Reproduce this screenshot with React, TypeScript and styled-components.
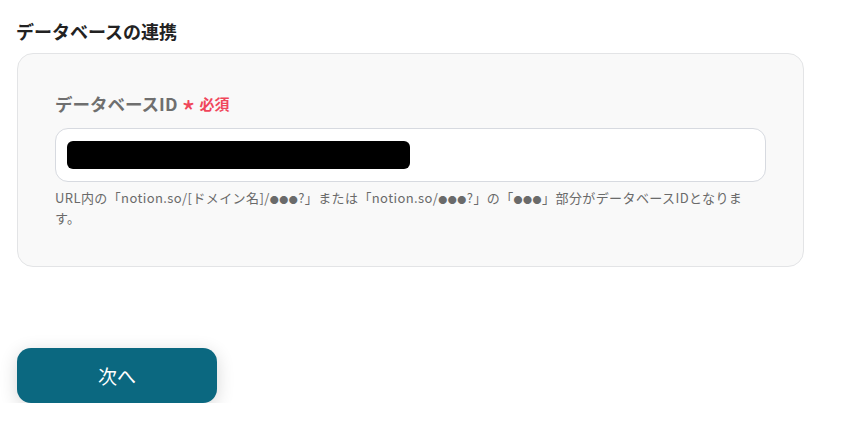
import React from "react";
import styled, { createGlobalStyle } from "styled-components";

const GlobalStyle = createGlobalStyle`
  html, body {
    margin: 0;
    padding: 0;
    background: #ffffff;
    font-family: "Noto Sans CJK JP", "Noto Sans", sans-serif;
  }
  * { box-sizing: border-box; }
`;

const Page = styled.div`
  padding: 19px 0 0 17px;
  width: 804px;
`;

const Title = styled.h2`
  margin: 0 0 10px -1px;
  font-size: 18px;
  line-height: 24px;
  font-weight: 700;
  color: #222222;
`;

const Card = styled.section`
  width: 787px;
  background: #f9f9f9;
  border: 1px solid #e3e4e6;
  border-radius: 16px;
  padding: 38px 37px 38px 37px;
  display: flex;
  flex-direction: column;
`;

const Label = styled.div`
  display: flex;
  align-items: center;
  font-size: 17.5px;
  line-height: 24px;
  font-weight: 700;
  color: #6f6f6f;
`;

const Asterisk = styled.span`
  margin-left: 4px;
  color: #f0465a;
  font-size: 30px;
  line-height: 24px;
  font-weight: 400;
  transform: translateY(7px);
`;

const Required = styled.span`
  margin-left: 4px;
  color: #f0465a;
  font-size: 15px;
  font-weight: 700;
`;

const InputBox = styled.div`
  margin-top: 12px;
  height: 54px;
  background: #ffffff;
  border: 1px solid #d7dae0;
  border-radius: 13px;
  display: flex;
  align-items: center;
  padding: 0 11px;
`;

const Masked = styled.div<{ $w: number }>`
  width: ${(p) => p.$w}px;
  height: 28px;
  background: #000000;
  border-radius: 6px;
`;

const Help = styled.p`
  margin: 6px 0 0;
  max-width: 690px;
  font-size: 13px;
  line-height: 20px;
  letter-spacing: 0.4px;
  color: #6a6a6a;
`;

const Dots = styled.span`
  font-size: 9px;
  line-height: 1;
  letter-spacing: 0.5px;
`;

const NextButton = styled.button`
  margin-top: 81px;
  width: 200px;
  height: 55px;
  border: none;
  border-radius: 14px;
  background: #0b6880;
  color: #ffffff;
  font-family: "Noto Sans CJK JP", sans-serif;
  font-size: 19px;
  box-shadow: 0 4px 18px rgba(0, 0, 0, 0.16);
  cursor: pointer;
`;

export default function App() {
  return (
    <>
      <GlobalStyle />
      <Page>
        <Title>データベースの連携</Title>
        <Card>
          <Label>
            データベースID
            <Asterisk>*</Asterisk>
            <Required>必須</Required>
          </Label>
          <InputBox>
            <Masked $w={343} />
          </InputBox>
          <Help>
            URL内の「notion.so/[ドメイン名]/<Dots>●●●</Dots>?」または「notion.so/<Dots>●●●</Dots>?」の「<Dots>●●●</Dots>」部分がデータベースIDとなります。
          </Help>
        </Card>
        <NextButton>次へ</NextButton>
      </Page>
    </>
  );
}
